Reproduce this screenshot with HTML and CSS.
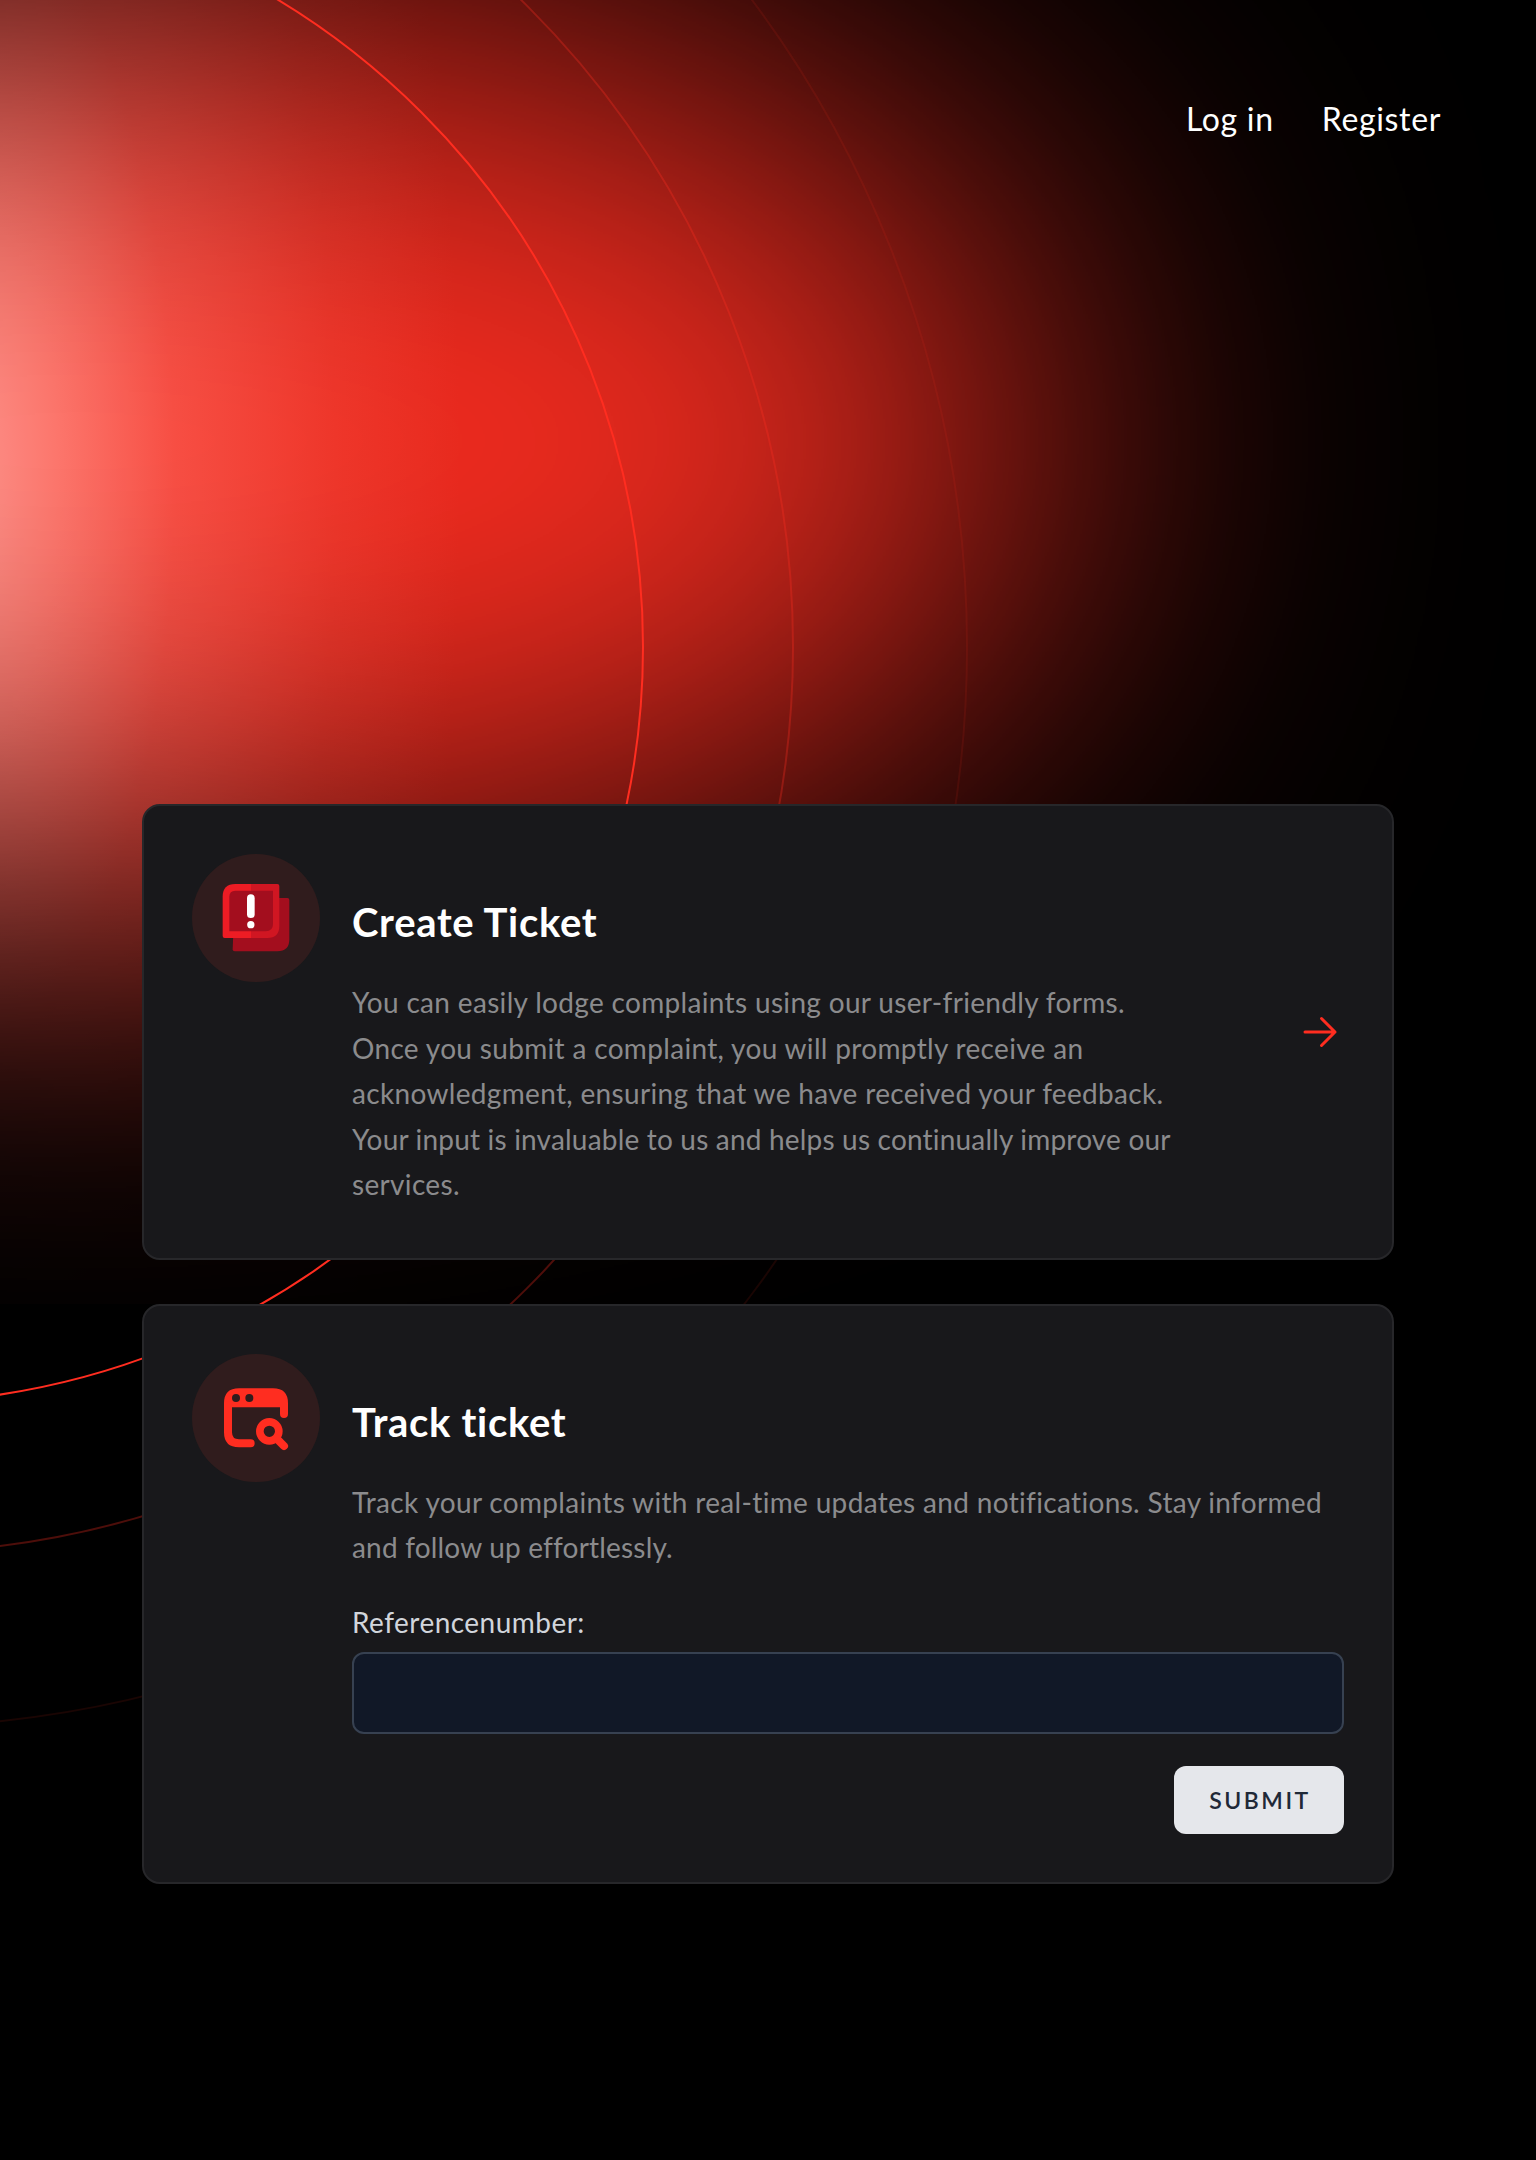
FILE: index.html
```html
<!DOCTYPE html>
<html lang="en">
<head>
<meta charset="utf-8">
<title>Tickets</title>
<link rel="stylesheet" href="styles.css">
</head>
<body>
<svg class="backdrop" viewBox="0 0 1536 2160" aria-hidden="true">
  <defs>
    <radialGradient id="heat" gradientUnits="userSpaceOnUse" cx="0" cy="0" r="500" gradientTransform="translate(-40 475) scale(1 2.7)">
      <stop offset="0" stop-color="#ff968e"/>
      <stop offset=".2" stop-color="#ff766c"/>
      <stop offset=".43" stop-color="#fa4f44"/>
      <stop offset=".75" stop-color="#f3372b"/>
      <stop offset="1" stop-color="#f02b1f"/>
    </radialGradient>
    <filter id="soft" filterUnits="userSpaceOnUse" x="-1800" y="-1200" width="4200" height="3400" color-interpolation-filters="sRGB">
      <feGaussianBlur stdDeviation="205"/>
    </filter>
    <mask id="glow" maskUnits="userSpaceOnUse" x="0" y="0" width="1536" height="1304">
      <ellipse cx="80" cy="441" rx="975" ry="464" fill="#fff" filter="url(#soft)"/>
    </mask>
  </defs>
  <rect width="1536" height="1304" fill="url(#heat)" mask="url(#glow)"/>
  <g fill="none" stroke="#ff2d20" stroke-width="2">
    <circle cx="-113" cy="647" r="756"/>
    <circle cx="-113" cy="647" r="906" opacity=".3"/>
    <circle cx="-113" cy="647" r="1080" opacity=".1"/>
  </g>
</svg>
<div class="page">
  <nav class="nav">
    <a class="nav-link login">Log in</a>
    <a class="nav-link register">Register</a>
  </nav>
  <main class="cards">
    <a class="card">
      <span class="badge">
        <svg viewBox="36 42 384 384">
          <path fill="#a30e1e" d="M164 174H322Q328 174 328 180V298Q328 334 292 334H164Q158 334 158 328Z"/>
          <path fill="#ed1c24" d="M213 132H166Q128 132 128 170V288Q128 294 134 294H213Z"/>
          <path fill="#d01622" d="M213 132H292Q298 132 298 138V258Q298 294 262 294H213Z"/>
          <path fill="#a30e1e" d="M166 152H279V252Q279 274 257 274H148V170Q148 152 166 152Z"/>
          <rect x="201" y="163" width="23" height="71" rx="11.5" fill="#fff"/>
          <circle cx="212.500" cy="254" r="11" fill="#fff"/>
        </svg>
      </span>
      <div class="content">
        <h2 class="title">Create Ticket</h2>
        <p class="text">You can easily lodge complaints using our user-friendly forms.<br>Once you submit a complaint, you will promptly receive an<br>acknowledgment, ensuring that we have received your feedback.<br><span class="snug">Your input is invaluable to us and helps us continually improve our</span><br>services.</p>
      </div>
      <svg class="arrow" viewBox="0 0 24 24"><path d="M4.500 12h15m0 0l-6.750-6.750M19.500 12l-6.750 6.750"/></svg>
    </a>
    <section class="card">
      <span class="badge">
        <svg viewBox="36 42 384 384">
          <path fill="#ff2d20" d="M132 202V190Q132 145 177 145H279Q324 145 324 190V222A12 12 0 0 1 300 222V202Z"/>
          <g fill="none" stroke="#ff2d20" stroke-width="24" stroke-linecap="round">
            <path d="M144 195V277Q144 310 177 310H212"/>
            <circle cx="268" cy="274" r="28.500" stroke-width="23"/>
            <path d="M290 296L312 318"/>
          </g>
          <circle cx="168" cy="174" r="12" fill="#301c1d"/>
          <circle cx="208" cy="174" r="12" fill="#301c1d"/>
        </svg>
      </span>
      <div class="content">
        <h2 class="title">Track ticket</h2>
        <p class="text">Track your complaints with real-time updates and notifications. Stay informed<br><span class="snug">and follow up effortlessly.</span></p>
        <form class="form">
          <label class="label" for="ref">Referencenumber:</label>
          <input class="input" id="ref" type="text">
          <button class="submit" type="button">Submit</button>
        </form>
      </div>
    </section>
  </main>
</div>
</body>
</html>
```
FILE: styles.css
```css
* { box-sizing: border-box; }
body {
  margin: 0;
  background: #000;
  color: #fff;
  font-family: Lato, "Liberation Sans", sans-serif;
  font-variant-ligatures: none;
}
.backdrop {
  position: absolute;
  top: 0;
  left: 0;
  width: 1536px;
  height: 2160px;
}
.page {
  position: relative;
  height: 2160px;
  padding: 80px 95px 0 142px;
}
.nav {
  display: flex;
  justify-content: flex-end;
  gap: 48px;
  height: 724px;
  font-size: 32px;
  line-height: 78px;
}
.nav-link { white-space: nowrap; }
.login { letter-spacing: .7px; }
.register { letter-spacing: .65px; }
.cards {
  display: flex;
  flex-direction: column;
  gap: 44px;
  width: 1252px;
}
.card {
  display: flex;
  align-items: flex-start;
  gap: 32px;
  padding: 48px;
  border: 2px solid #27272a;
  border-radius: 18px;
  background: #18181b;
}
.badge {
  flex: none;
  width: 128px;
  height: 128px;
  border-radius: 50%;
  background: #301c1d;
}
.badge svg { display: block; width: 128px; height: 128px; }
.content { flex: 1; padding-top: 40px; }
.title {
  margin: 0;
  font-size: 40px;
  line-height: 56px;
  font-weight: 700;
  letter-spacing: .7px;
}
.text {
  margin: 30px 0 2px;
  font-size: 28px;
  line-height: 45.5px;
  letter-spacing: .33px;
  color: #8b8b8d;
  white-space: nowrap;
}
.snug { letter-spacing: .19px; }
.arrow {
  flex: none;
  align-self: center;
  width: 48px;
  height: 48px;
  fill: none;
  stroke: #ff2d20;
  stroke-width: 1.5;
  stroke-linecap: round;
  stroke-linejoin: round;
}
.form {
  display: flex;
  flex-direction: column;
  padding-top: 29px;
}
.label {
  font-size: 28px;
  line-height: 40px;
  margin-bottom: 10px;
  letter-spacing: .47px;
  color: #d1d5db;
}
.input {
  height: 82px;
  width: 992px;
  border: 2px solid #374151;
  border-radius: 12px;
  background: #111827;
}
.submit {
  align-self: flex-end;
  width: 170px;
  height: 68px;
  margin-top: 32px;
  padding: 0 0 0 2px;
  border: 0;
  border-radius: 12px;
  background: #e5e7eb;
  color: #1f2937;
  font: 600 23px Lato, sans-serif;
  letter-spacing: 2.5px;
  text-transform: uppercase;
}
```
